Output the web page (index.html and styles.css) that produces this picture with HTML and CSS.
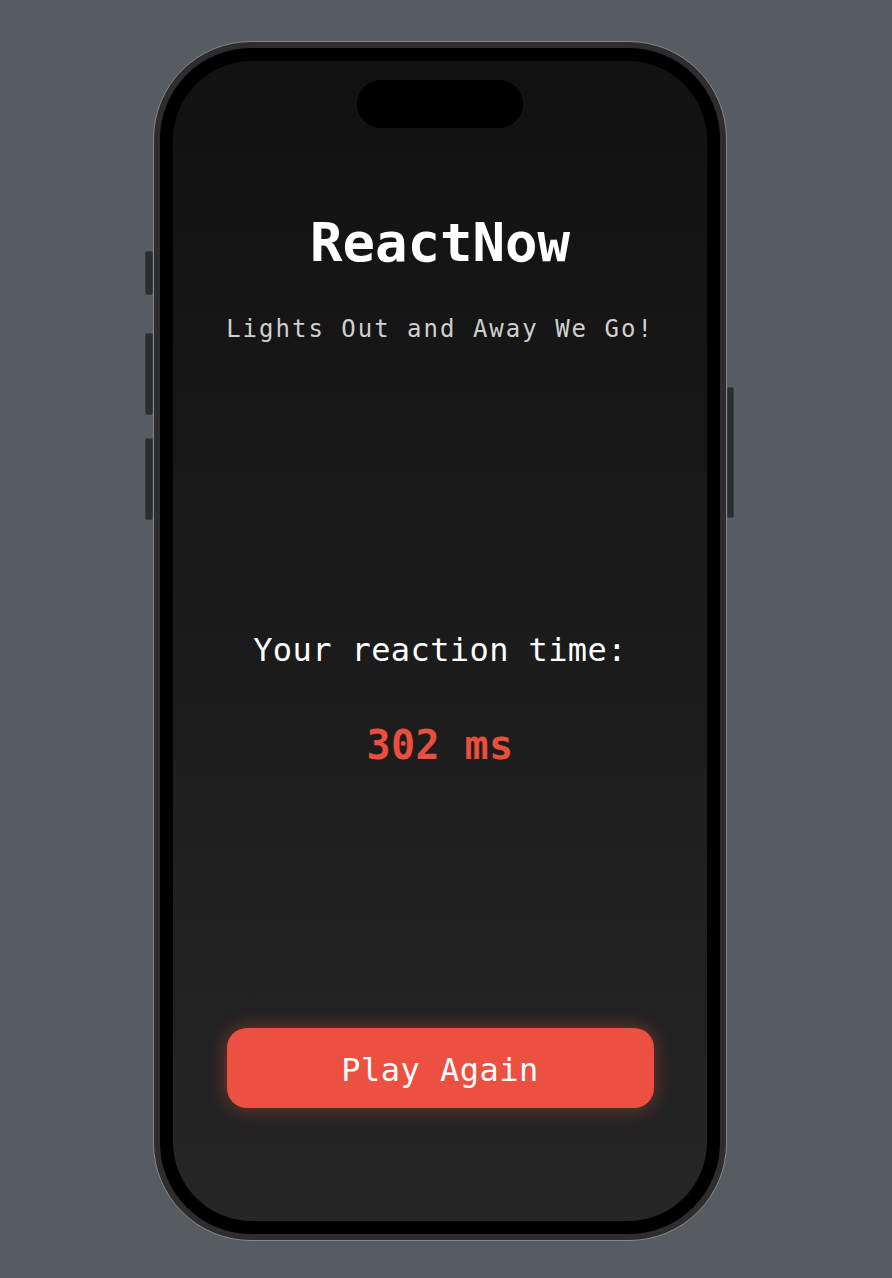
FILE: index.html
```html
<!DOCTYPE html>
<html lang="en">
<head>
<meta charset="utf-8">
<title>ReactNow</title>
<link rel="stylesheet" href="styles.css">
</head>
<body>
<div class="stage">
  <div class="phone">
    <span class="side-btn btn-action"></span>
    <span class="side-btn btn-vol-up"></span>
    <span class="side-btn btn-vol-down"></span>
    <span class="side-btn btn-power"></span>
    <div class="bezel">
      <div class="screen">
        <div class="island"></div>
        <h1 class="title">ReactNow</h1>
        <p class="subtitle">Lights Out and Away We Go!</p>
        <div class="result">
          <p class="result-label">Your reaction time:</p>
          <p class="result-value">302 ms</p>
        </div>
        <button class="play-btn">Play Again</button>
      </div>
    </div>
  </div>
</div>
</body>
</html>
```
FILE: styles.css
```css
html, body {
  margin: 0;
  padding: 0;
  background: #575c63;
}
.stage {
  padding: 41px 0 0 153px;
  height: 1278px;
  box-sizing: border-box;
}
.phone {
  position: relative;
  width: 574px;
  height: 1200px;
  box-sizing: border-box;
  border: 1px solid #84878c;
  border-radius: 98px;
  background: #2d2d2f;
  padding: 6px;
}
.side-btn {
  position: absolute;
  width: 8px;
  background: #2c2d30;
  border: 1px solid #3b3c40;
  box-sizing: border-box;
  border-radius: 2px;
}
.btn-action { left: -9px; top: 209px; height: 44px; }
.btn-vol-up { left: -9px; top: 291px; height: 82px; }
.btn-vol-down { left: -9px; top: 396px; height: 82px; }
.btn-power { right: -8px; top: 345px; height: 131px; width: 7px; }
.bezel {
  height: 100%;
  box-sizing: border-box;
  background: #000;
  border-radius: 91px;
  padding: 13px;
}
.screen {
  position: relative;
  height: 100%;
  box-sizing: border-box;
  border-radius: 79px;
  background: linear-gradient(180deg, #111111 0%, #1b1b1b 50%, #262626 100%);
  display: flex;
  flex-direction: column;
  align-items: center;
  padding-top: 150px;
  font-family: "DejaVu Sans Mono", "Liberation Mono", monospace;
  overflow: hidden;
}
.island {
  position: absolute;
  top: 19px;
  left: 50%;
  width: 166px;
  height: 48px;
  margin-left: -83px;
  background: #000;
  border-radius: 24px;
}
.title {
  margin: 0;
  font-size: 54px;
  line-height: 64px;
  font-weight: bold;
  color: #ffffff;
  letter-spacing: 0;
}
.subtitle {
  margin: 38px 0 0;
  font-size: 24px;
  line-height: 32px;
  color: #cfcfcf;
  letter-spacing: 2px;
}
.result {
  margin-top: 285px;
  display: flex;
  flex-direction: column;
  align-items: center;
}
.result-label {
  margin: 0;
  font-size: 32px;
  line-height: 40px;
  color: #ffffff;
  letter-spacing: 0.4px;
}
.result-value {
  margin: 51px 0 0;
  font-size: 40px;
  line-height: 48px;
  font-weight: bold;
  color: #e94e3e;
  letter-spacing: 0.4px;
}
.play-btn {
  margin-top: 259px;
  width: 427px;
  height: 80px;
  border: none;
  border-radius: 20px;
  background: #eb5040;
  color: #ffffff;
  font-family: "DejaVu Sans Mono", "Liberation Mono", monospace;
  font-size: 32px;
  letter-spacing: 0.5px;
  box-shadow: 0 0 18px rgba(235, 80, 64, 0.45);
  padding: 4px 0 0;
}
```
